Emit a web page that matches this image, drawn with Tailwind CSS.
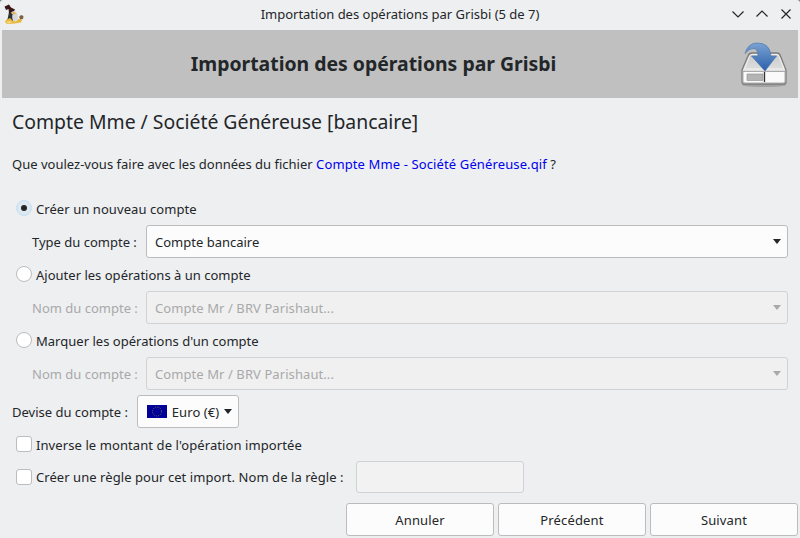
<!DOCTYPE html>
<html lang="fr">
<head>
<meta charset="utf-8">
<title>Importation des opérations par Grisbi</title>
<script src="https://cdn.jsdelivr.net/npm/@tailwindcss/browser@4"></script>
</head>
<body class="bg-[#68807f]">
<div class="flex h-[538px] w-[800px] flex-col overflow-hidden rounded-t-[3px] bg-[#eeeff1] font-['Noto_Sans',sans-serif] text-[13px] leading-[18px] text-[#232629]">
  <header class="flex h-[30px] shrink-0 items-center pb-[2px]">
    <div class="w-[100px] pl-1">
      <svg width="20" height="20" viewBox="0 0 20 20">
        <path d="M5 8l4-1 2 6-2 4-4-1-2 1 1-4z" fill="#303235"/>
        <ellipse cx="11" cy="13" rx="2.800" ry="4.200" fill="#d5d9dc"/>
        <circle cx="9.500" cy="8" r="2.300" fill="#dcdedb"/>
        <path d="M0.500 2.500L5 .5l2 3 4 2-1 1.500-5 2-.5-4-2.500 1z" fill="#391817"/>
        <path d="M8.500 8l4.500 1-4 1.500z" fill="#efaa22"/>
        <path d="M1 18l1-2 4-2 3 3 3 .5 3-3 3 1.500-1 2.500-6 1-8 .5z" fill="#e9b83d"/>
        <path d="M2 18l4-1 2 1.500-4 1z" fill="#f4dc82"/>
        <path d="M15 13l2-2 2.500 1-.5 3-2.500.5z" fill="#81603f"/>
      </svg>
    </div>
    <h1 class="flex-1 text-center tracking-[-0.01px]">Importation des opérations par Grisbi (5 de 7)</h1>
    <div class="flex w-[100px] justify-end gap-3 pr-2">
      <svg width="12" height="12" viewBox="0 0 12 12" fill="none" stroke="#232629" stroke-width="1.200"><path d="M.5 3.500L6 9l5.500-5.500"/></svg>
      <svg width="12" height="12" viewBox="0 0 12 12" fill="none" stroke="#232629" stroke-width="1.200"><path d="M.5 8.500L6 3l5.500 5.500"/></svg>
      <svg width="12" height="12" viewBox="0 0 12 12" fill="none" stroke="#232629" stroke-width="1.200"><path d="M1.500 1.500l9 9m0-9l-9 9"/></svg>
    </div>
  </header>
  <div class="mx-[2px] flex h-[68px] shrink-0 items-center bg-[#c0c0c0]">
    <h2 class="flex-1 pl-[5px] text-center text-[19.4px] leading-[26px] font-bold">Importation des opérations par Grisbi</h2>
    <svg class="mr-[10px] shrink-0" width="48" height="48" viewBox="0 0 48 48">
      <defs>
        <linearGradient id="top" x2="0" y2="1"><stop stop-color="#c9c9c9"/><stop offset="1" stop-color="#f0f0f0"/></linearGradient>
        <linearGradient id="arrow" x2="0" y2="1"><stop stop-color="#7ba3d2"/><stop offset="1" stop-color="#2a5fab"/></linearGradient>
      </defs>
      <ellipse cx="24" cy="45" rx="22" ry="2" fill="#a2a2a2"/>
      <path d="M12 13h25q2.500 0 3.500 3L46 30v12q0 2-2 2H4q-2 0-2-2V30l6-14q1-3 4-3z" fill="url(#top)" stroke="#7c7c7c" stroke-width="1.300"/>
      <path d="M12 14.500h25q1.500 0 2 2L44 29H4.500l5-12.500q.8-2 2.500-2z" fill="none" stroke="#f5f5f5" stroke-width=".9"/>
      <path d="M3 31.500h42V41q0 2-2 2H5q-2 0-2-2z" fill="#fafafa" stroke="#999" stroke-width=".8"/>
      <path d="M7 34h16v6.500H7z" fill="#b4b4b4" stroke="#999" stroke-width=".7"/>
      <path d="M24.500 32v10" stroke="#333" stroke-width="1.300"/>
      <path d="M5 13.500Q8 3 17 3q13 0 14 13h5.500L25 31 11.500 16H18q0-8-5-7.500-4 0-8 5z" fill="url(#arrow)" stroke="#4a79b3" stroke-width=".7"/>
    </svg>
  </div>
  <main class="flex flex-1 flex-col">
    <h3 class="flex h-12 items-center px-3 text-[19.4px] leading-[26px] tracking-[-0.01px]">Compte Mme / Société Généreuse [bancaire]</h3>
    <p class="flex h-9 items-center px-3 whitespace-pre"><span class="tracking-[0.01px]">Que voulez-vous faire avec les données du fichier </span><span class="tracking-[0.12px] text-[#0000ee]">Compte Mme - Société Généreuse.qif</span> ?</p>
    <div class="mt-[10px] flex h-[33px] items-center gap-1 pb-[2px] pl-4">
      <span class="flex size-4 items-center justify-center rounded-full border border-[#c2dff3] bg-[#dde8f1]"><span class="size-[6px] rounded-full bg-[#232629]"></span></span>
      <span class="pt-[2px] tracking-[0.07px]">Créer un nouveau compte</span>
    </div>
    <div class="flex h-[33px] items-center pr-3 pl-8">
      <span class="w-[114px] pt-px">Type du compte :</span>
      <div class="flex h-[33px] flex-1 items-center justify-between rounded-[3px] border border-[#babcbe] bg-[#fcfcfc] pr-[6px] pl-2"><span class="pt-px">Compte bancaire</span><svg width="8" height="5" viewBox="0 0 8 5"><path d="M0 0h8L4 5z" fill="#232629"/></svg></div>
    </div>
    <div class="flex h-[33px] items-center gap-1 pb-[2px] pl-4">
      <span class="size-4 rounded-full border border-[#babcbe] bg-white"></span>
      <span class="pt-[2px] tracking-[0.01px]">Ajouter les opérations à un compte</span>
    </div>
    <div class="flex h-[33px] items-center pr-3 pl-8 text-[#a8a9aa]">
      <span class="w-[114px] pt-px">Nom du compte :</span>
      <div class="flex h-[33px] flex-1 items-center justify-between rounded-[3px] border border-[#d1d2d4] bg-[#f0f0f0] pr-[6px] pl-2"><span class="pt-px tracking-[0.08px]">Compte Mr / BRV Parishaut...</span><svg width="8" height="5" viewBox="0 0 8 5"><path d="M0 0h8L4 5z" fill="#a8a9aa"/></svg></div>
    </div>
    <div class="flex h-[33px] items-center gap-1 pb-[2px] pl-4">
      <span class="size-4 rounded-full border border-[#babcbe] bg-white"></span>
      <span class="pt-[2px] tracking-[0.02px]">Marquer les opérations d'un compte</span>
    </div>
    <div class="flex h-[33px] items-center pr-3 pl-8 text-[#a8a9aa]">
      <span class="w-[114px] pt-px">Nom du compte :</span>
      <div class="flex h-[33px] flex-1 items-center justify-between rounded-[3px] border border-[#d1d2d4] bg-[#f0f0f0] pr-[6px] pl-2"><span class="pt-px tracking-[0.08px]">Compte Mr / BRV Parishaut...</span><svg width="8" height="5" viewBox="0 0 8 5"><path d="M0 0h8L4 5z" fill="#a8a9aa"/></svg></div>
    </div>
    <div class="mt-[5px] flex h-[33px] items-center pl-3">
      <span class="w-[125px] pt-px">Devise du compte :</span>
      <div class="flex h-[33px] w-[102px] items-center justify-between rounded-[3px] border border-[#babcbe] bg-[#fcfcfc] pr-[6px] pl-[9px]">
        <svg width="20" height="13" viewBox="0 0 20 13"><path d="M0 0h20v13H0z" fill="#000099"/><circle cx="10" cy="6.500" r="4.500" fill="none" stroke="#77774f" stroke-width="1" stroke-dasharray="1 1.356"/></svg>
        <span class="pt-px tracking-[0.06px]">Euro (€)</span>
        <svg width="8" height="5" viewBox="0 0 8 5"><path d="M0 0h8L4 5z" fill="#232629"/></svg>
      </div>
    </div>
    <div class="flex h-[33px] items-center gap-1 pb-[2px] pl-4">
      <span class="size-4 rounded-[3px] border border-[#babcbe] bg-white"></span>
      <span class="pt-[2px] tracking-[0.09px]">Inverse le montant de l'opération importée</span>
    </div>
    <div class="flex h-8 items-center gap-1 pl-4">
      <span class="size-4 rounded-[3px] border border-[#babcbe] bg-white"></span>
      <span class="w-[316px] tracking-[0.06px]">Créer une règle pour cet import. Nom de la règle :</span>
      <span class="h-8 w-[168px] rounded-[3px] border border-[#d1d2d4] bg-[#f2f2f2]"></span>
    </div>
    <footer class="mt-[10px] flex justify-end gap-1 pr-[2px] tracking-[0.15px]">
      <button class="h-[33px] w-[148px] rounded-[3px] border border-[#babcbe] bg-[#fcfcfc] pt-px">Annuler</button>
      <button class="h-[33px] w-[148px] rounded-[3px] border border-[#babcbe] bg-[#fcfcfc] pt-px">Précédent</button>
      <button class="h-[33px] w-[148px] rounded-[3px] border border-[#babcbe] bg-[#fcfcfc] pt-px">Suivant</button>
    </footer>
  </main>
</div>
</body>
</html>
